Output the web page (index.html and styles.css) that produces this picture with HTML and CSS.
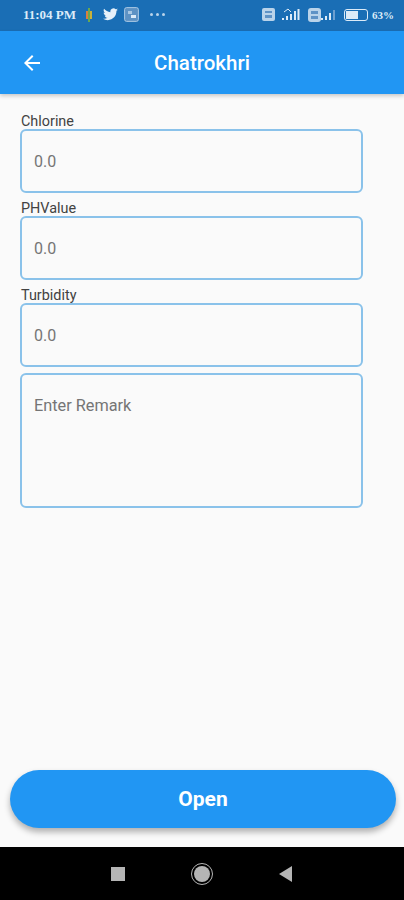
FILE: index.html
```html
<!DOCTYPE html>
<html lang="en">
<head>
  <meta charset="UTF-8">
  <meta name="viewport" content="width=device-width, initial-scale=1.0">
  <title>Chatrokhri</title>
  <link rel="stylesheet" href="styles.css">
</head>
<body>
  <!-- Status bar -->
  <div class="status-bar">
    <div class="status-left">
      <span class="status-time">11:04 PM</span>
      <svg width="8" height="14" viewBox="0 0 8 14"><rect x="1" y="3" width="2" height="8" fill="#d8813f"/><rect x="3" y="0" width="2" height="14" fill="#6aa84f"/><rect x="5" y="3" width="2" height="8" fill="#c9b13c"/></svg>
      <svg class="icon-twitter" width="15" height="13" viewBox="0 0 24 20"><path fill="#e6f0fa" d="M24 2.4c-.9.4-1.8.7-2.8.8 1-.6 1.800-1.500 2.200-2.700-1 .6-2 1-3.100 1.200A4.900 4.900 0 0 0 11.900 6.200C7.800 6 4.200 4 1.700.9c-1.300 2.300-.6 5.100 1.500 6.500-.8 0-1.500-.2-2.200-.6 0 2.400 1.700 4.400 3.900 4.900-.7.2-1.500.2-2.200.1.600 2 2.400 3.400 4.600 3.400A9.900 9.900 0 0 1 0 16.800 14 14 0 0 0 7.500 19c9.100 0 14.300-7.700 14-14.600 1-.7 1.800-1.500 2.500-2z"/></svg>
      <svg width="15" height="15" viewBox="0 0 15 15"><rect x="0.6" y="0.6" width="13.800" height="13.800" rx="2" fill="#5d92c4" stroke="#a9c8e4"/><rect x="4" y="4" width="4" height="3" fill="#a9c8e4"/><rect x="7" y="8" width="5" height="3" fill="#dcebf8"/></svg>
      <span class="status-dots">
        <i></i><i></i><i></i>
      </span>
    </div>
    <div class="status-right">
      <svg width="13" height="13" viewBox="0 0 13 13"><rect width="13" height="13" rx="2" fill="#b9d3ea"/><rect x="3" y="3" width="7" height="2" fill="#5f93c6"/><rect x="3" y="7" width="7" height="3" fill="#5f93c6"/></svg>
      <svg class="signal-first" width="19" height="13" viewBox="0 0 19 13"><rect x="1" y="10" width="2" height="2" fill="#dcebf8"/><rect x="5" y="8" width="2" height="4" fill="#dcebf8"/><rect x="9" y="6" width="2" height="6" fill="#dcebf8"/><rect x="13" y="3" width="2" height="9" fill="#dcebf8"/><rect x="16.500" y="1" width="2" height="11" fill="#dcebf8"/><path d="M3 4 L7 1 L10 4" fill="none" stroke="#dcebf8"/></svg>
      <svg width="13" height="14" viewBox="0 0 13 14"><rect width="13" height="14" rx="3" fill="#b9d3ea"/><rect x="3" y="3" width="7" height="3" fill="#5f93c6"/><rect x="3" y="8" width="7" height="3" fill="#5f93c6"/></svg>
      <svg class="signal-second" width="15" height="12" viewBox="0 0 15 12"><rect x="0" y="9" width="2" height="2" fill="#dcebf8"/><rect x="4" y="7" width="2" height="4" fill="#dcebf8"/><rect x="8" y="4" width="2" height="7" fill="#dcebf8"/><rect x="12" y="1" width="2" height="10" fill="#6d9fcf"/></svg>
      <span class="battery"><span class="battery-level"></span></span>
      <span class="status-percent">63%</span>
    </div>
  </div>

  <!-- App bar -->
  <div class="app-bar">
    <svg class="back-icon" width="24" height="24" viewBox="0 0 24 24"><path fill="#fff" d="M20 11H7.830l5.590-5.590L12 4l-8 8 8 8 1.410-1.410L7.830 13H20v-2z"/></svg>
    <h1>Chatrokhri</h1>
  </div>

  <!-- Form -->
  <div class="content">
    <div class="form-group">
      <label>Chlorine</label>
      <div class="field">0.0</div>
    </div>
    <div class="form-group">
      <label>PHValue</label>
      <div class="field">0.0</div>
    </div>
    <div class="form-group">
      <label>Turbidity</label>
      <div class="field">0.0</div>
    </div>
    <div class="field field-remark">Enter Remark</div>
  </div>

  <div class="actions">
    <button type="button" class="open-btn">Open</button>
  </div>

  <!-- Navigation bar -->
  <div class="nav-bar">
    <span class="nav-square"></span>
    <span class="nav-circle"><span></span></span>
    <span class="nav-back"></span>
  </div>
</body>
</html>
```

FILE: styles.css
```css
/* Global Styles */
* {
  box-sizing: border-box;
}

body {
  font-family: Roboto, "Liberation Sans", sans-serif;
  margin: 0;
  width: 404px;
  height: 900px;
  background-color: #fafafa;
  display: flex;
  flex-direction: column;
  overflow: hidden;
}

/* Status bar */
.status-bar {
  height: 31px;
  flex-shrink: 0;
  background-color: #1a6eb5;
  color: #dcebf8;
  display: flex;
  align-items: center;
  justify-content: space-between;
  padding: 0 10px 2px 23px;
}

.status-left,
.status-right {
  display: flex;
  align-items: center;
}

.status-left {
  gap: 6px;
}

.status-right {
  gap: 4px;
}

.status-time {
  font-family: "Liberation Serif", serif;
  font-size: 13px;
  font-weight: bold;
  margin-right: 3px;
}

.icon-twitter {
  margin-left: 4px;
}

.status-dots {
  display: flex;
  gap: 3px;
  margin-left: 5px;
}

.status-dots i {
  width: 3px;
  height: 3px;
  border-radius: 50%;
  background-color: #b9d3ea;
}

.signal-first {
  margin-left: 2px;
  margin-right: 4px;
}

.signal-second {
  margin-left: -4px;
  margin-right: 4px;
}

.battery {
  width: 24px;
  height: 12px;
  border: 1px solid #dcebf8;
  border-radius: 3px;
  padding: 1px;
  display: flex;
}

.battery-level {
  width: 62%;
  background-color: #dcebf8;
}

.status-percent {
  font-family: "Liberation Serif", serif;
  font-size: 11px;
  font-weight: bold;
}

/* App bar */
.app-bar {
  height: 63px;
  flex-shrink: 0;
  background-color: #2196f3;
  box-shadow: 0 2px 4px rgba(0, 0, 0, 0.2);
  position: relative;
  display: flex;
  align-items: center;
  justify-content: center;
}

.app-bar h1 {
  margin: 0;
  color: #ffffff;
  font-size: 20.5px;
  font-weight: 500;
}

.back-icon {
  position: absolute;
  left: 20px;
  top: 20px;
}

/* Form */
.content {
  flex: 1;
  padding: 18px 41px 0 20px;
  display: flex;
  flex-direction: column;
  gap: 6px;
}

.form-group {
  display: flex;
  flex-direction: column;
}

.form-group label {
  font-size: 14.400px;
  line-height: 17px;
  color: #424242;
  padding: 1px 0 0 1px;
  margin-bottom: -1px;
}

.field {
  height: 64px;
  border: 2px solid #8ac2ea;
  border-radius: 6px;
  padding: 0 12px;
  display: flex;
  align-items: center;
  font-size: 16px;
  color: #757575;
}

.field-remark {
  height: 135px;
  align-items: flex-start;
  padding-top: 21px;
  line-height: 19px;
  font-size: 16.300px;
}

/* Actions */
.actions {
  padding: 0 8px 19px 10px;
}

.open-btn {
  width: 100%;
  height: 58px;
  border: none;
  border-radius: 29px;
  background-color: #2196f3;
  color: #ffffff;
  font-family: inherit;
  font-size: 21px;
  font-weight: 700;
  box-shadow: 0 4px 6px rgba(0, 0, 0, 0.3);
}

/* Navigation bar */
.nav-bar {
  height: 53px;
  flex-shrink: 0;
  background-color: #000000;
  display: flex;
  align-items: center;
  justify-content: center;
  gap: 66px;
  padding-right: 1px;
}

.nav-square {
  width: 14px;
  height: 14px;
  background-color: #b5b5b5;
}

.nav-circle {
  width: 22px;
  height: 22px;
  border: 1px solid #b5b5b5;
  border-radius: 50%;
  display: flex;
  align-items: center;
  justify-content: center;
}

.nav-circle span {
  width: 16px;
  height: 16px;
  border-radius: 50%;
  background-color: #b5b5b5;
}

.nav-back {
  width: 0;
  height: 0;
  border-top: 8px solid transparent;
  border-bottom: 8px solid transparent;
  border-right: 13px solid #b5b5b5;
}
```
